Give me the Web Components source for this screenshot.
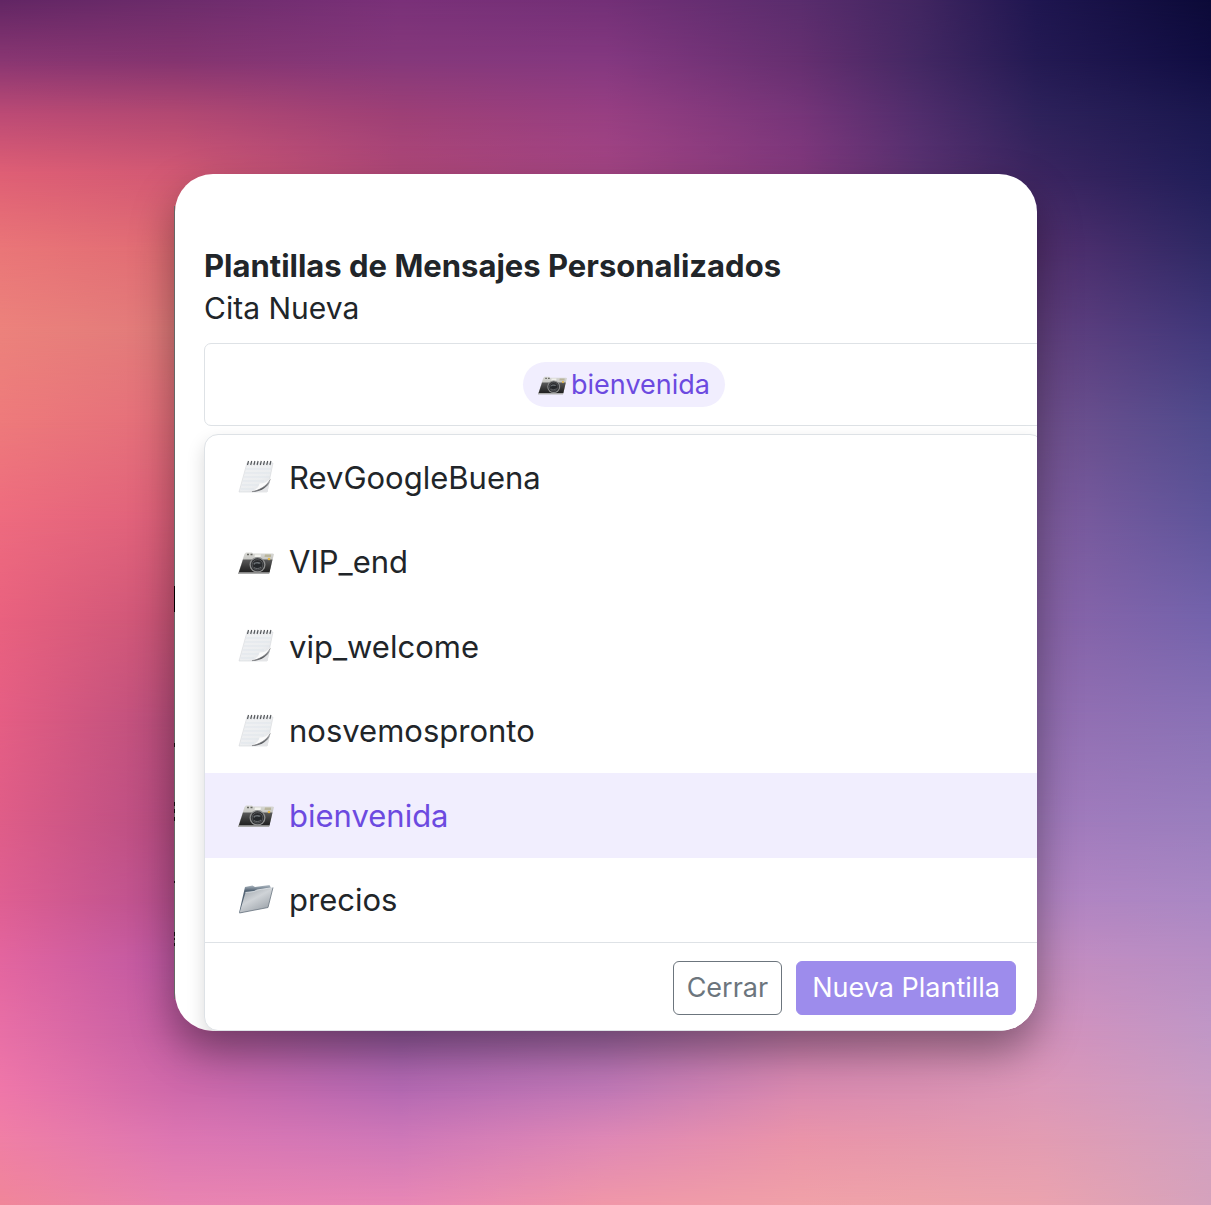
<!DOCTYPE html>
<html lang="es">
<head>
<meta charset="utf-8">
<meta name="viewport" content="width=device-width, initial-scale=1">
<title>Plantillas de Mensajes Personalizados</title>
<style>
  body { margin: 0; font-family: Inter, "Open Sans", "Liberation Sans", sans-serif; color: #212529; }
</style>
</head>
<body>
<mesh-backdrop>
  <template-card>
    <span slot="title">Plantillas de Mensajes Personalizados</span>
    <span slot="subtitle">Cita Nueva</span>
    <template-field><template-chip icon="camera">bienvenida</template-chip></template-field>
    <template-menu>
      <template-option icon="note">RevGoogleBuena</template-option>
      <template-option icon="camera">VIP_end</template-option>
      <template-option icon="note">vip_welcome</template-option>
      <template-option icon="note">nosvemospronto</template-option>
      <template-option icon="camera" selected>bienvenida</template-option>
      <template-option icon="folder">precios</template-option>
      <action-button slot="actions" variant="outline">Cerrar</action-button>
      <action-button slot="actions" variant="primary">Nueva Plantilla</action-button>
    </template-menu>
  </template-card>
</mesh-backdrop>
<script>
const ICONS = {
  note: `
    <defs>
      <linearGradient id="paper" x1="0" y1="0" x2="1" y2="1"><stop offset="0" stop-color="#f1f2f4"/><stop offset=".6" stop-color="#eceef0"/><stop offset="1" stop-color="#dcdfe2"/></linearGradient>
      <linearGradient id="shade" x1="12" y1="33" x2="33" y2="20" gradientUnits="userSpaceOnUse"><stop offset="0" stop-color="#b9bbbe"/><stop offset=".45" stop-color="#4b4e52"/><stop offset="1" stop-color="#a5a8ab"/></linearGradient>
    </defs>
    <path d="M9 4H35L29 33H1Z" fill="url(#paper)" stroke="#d5d7da" stroke-width=".6"/>
    <path d="M8 10H33M7 14H32.500M6 18H31.500M5 22H26M4 26H22M3 30H16" stroke="#dbe3ea" stroke-width=".7"/>
    <path d="M32.500 19.500 29.500 33H12C17 31.500 20 29 21.500 25 26 25 30 23 32.500 19.500Z" fill="#e4e5e7"/>
    <path d="M32 22C29 26.500 21 31.500 12 33H17C24 31.500 30 27.500 31.500 23.500Z" fill="url(#shade)"/>
    <path d="M32.500 19.500C30 22.500 26 24.500 21.500 24.500 20.500 29 17 31.500 12 33 21 31.500 28.500 27.500 32.500 19.500Z" fill="#fbfbfb"/>
    <path d="M32.300 20.500C28.500 27.500 21 31.500 14 32.700" stroke="#77797c" stroke-width=".8" fill="none"/>
    <path d="M9.500 6 10.500 2M12.700 6 13.700 2M15.900 6 16.900 2M19.100 6 20.100 2M22.300 6 23.300 2M25.500 6 26.500 2M28.700 6 29.700 2M31.900 6 32.900 2" stroke="#55585c" stroke-width="1.200"/>`,
  camera: `
    <defs>
      <linearGradient id="top" x1="0" y1="0" x2="0" y2="1"><stop offset="0" stop-color="#d9d9d5"/><stop offset="1" stop-color="#a3a3a0"/></linearGradient>
      <linearGradient id="body" x1="0" y1="0" x2="0" y2="1"><stop offset="0" stop-color="#5b5b5b"/><stop offset=".6" stop-color="#353535"/><stop offset="1" stop-color="#202020"/></linearGradient>
    </defs>
    <g transform="translate(0 1)">
    <path d="M6.500 9 8 7.500H14L15 8.500H34.500L36 9 31 29H0Z" fill="url(#top)"/>
    <path d="M5 14.500H34.500L31.500 27.500H.8Z" fill="url(#body)"/>
    <path d="M.5 27.500H31.500L31 29H0Z" fill="#aaa"/>
    <path d="M9 9.500H11M12.500 9.500H14.500" stroke="#64655f" stroke-width="1.600"/>
    <path d="M17 9.500H23L22.500 12H16.500Z" fill="#f1f1ec"/>
    <path d="M27 9.500H33V12H26.500Z" fill="#b9b59c"/>
    <circle cx="31" cy="14" r="1.300" fill="#e0b64a"/>
    <ellipse cx="19.500" cy="19.800" rx="8" ry="7.800" fill="#8f9090"/>
    <ellipse cx="19.500" cy="19.800" rx="6.700" ry="6.500" fill="#2b2c2e"/>
    <ellipse cx="19.500" cy="19.800" rx="5.400" ry="5.200" fill="none" stroke="#686b6e" stroke-width=".7"/>
    <ellipse cx="19.500" cy="19.800" rx="3.800" ry="3.400" fill="#25282b"/>
    <path d="M15.500 18.500C17.500 16.500 21 16.500 23 18L21 19C19 18.300 17 18.500 16 20Z" fill="#6d7276"/>
    <path d="M16 22.500C18 24 21 24 23 22" stroke="#85888b" stroke-width=".7" fill="none"/>
    </g>`,
  folder: `
    <defs>
      <linearGradient id="back" x1="0" y1="0" x2="0" y2="1"><stop offset="0" stop-color="#b4bec7"/><stop offset=".2" stop-color="#566676"/></linearGradient>
      <linearGradient id="front" x1="0" y1="0" x2=".7" y2="1"><stop offset="0" stop-color="#949ba2"/><stop offset=".5" stop-color="#cfd3d7"/><stop offset="1" stop-color="#9aa1a8"/></linearGradient>
    </defs>
    <path d="M7 5 14.500 3.500 17 5 31.500 3 33 6 28 25 1 31Z" fill="url(#back)"/>
    <path d="M7.500 10.500 16 9.500 19 8 35 5.500 30 25.500 1.500 31Z" fill="url(#front)"/>
    <path d="M7.500 10.500 16 9.500 19 8 35 5.500" fill="none" stroke="#e6eaee" stroke-width=".8"/>
    <path d="M35 5.500 30 25.500 1.500 31" fill="none" stroke="#6a7580" stroke-width=".8"/>`
};

function define(name, markup, setup) {
  const template = document.createElement("template");
  template.innerHTML = markup;
  customElements.define(name, class extends HTMLElement {
    constructor() {
      super();
      this.attachShadow({ mode: "open" }).append(template.content.cloneNode(true));
    }
    connectedCallback() {
      if (setup) setup(this, this.shadowRoot);
    }
  });
}

/* Each row is a horizontal gradient that fades in from the row above it. */
const WIDE = [0, 175, 400, 605, 800, 920, 1037, 1211];
const SIDES = [0, 175, 1037, 1211];
const MESH = [
  [0, "622664 6c2c6b 7a3179 733077 5a2d6d 412661 1f1650 0c0a38"],
  [60, "893672 843470 85387b 843880 652f70 432863 241a53 100d42"],
  [115, "bd4b75 b34972 9e4076 983f82 763579 502d6c 2e225b 1a174e"],
  [174, "df5f75 d25974 b04879 a44584 83397e 5a3272 3b2560 201d58"],
  [250, "ea7678 e06c74 543070 2f2965"],
  [330, "ec827c e07a7a 63407f 40377a"],
  [420, "ee7a7b e36e7a 72508e 4f4a8c"],
  [520, "ee6b7f dd607a 805c9e 5f559b"],
  [620, "e9617f c95577 8a64a8 7463ac"],
  [720, "e55e84 b84e7c 946fb2 8a72b6"],
  [820, "df5d88 b54c82 a27abc 9a7ebe"],
  [900, "df5f92 b7508e b384c2 aa88c4"],
  [960, "e3659f bd58a2 c48cc0 b78ec4"],
  [1031, "e86fa6 c45fa4 a462ae b070b4 d084b6 d68cb8 d491bc c097c6"],
  [1090, "ef77a9 cf69aa b469b2 c078b6 da8ab0 da90b2 dc98b8 cb9cc4"],
  [1140, "f07fa5 dd76b2 cf78b8 df88b5 ea94a9 e698ad e39cb2 d29fc0"],
  [1205, "f08699 e984b0 e887b5 f097a8 f0a1a8 eea3aa eba3ae d5a2bc"]
];

define("mesh-backdrop", `
  <style>
    :host { display: grid; min-height: 100vh; }
    .mesh, .content { grid-area: 1 / 1; }
    .mesh { display: grid; }
    .mesh div { grid-area: 1 / 1; }
    .content { position: relative; padding: 174px 174px 174px 175px; }
  </style>
  <div class="mesh" aria-hidden="true"></div>
  <div class="content"><slot></slot></div>`,
  (host, root) => {
    const mesh = root.querySelector(".mesh");
    MESH.forEach(([y, list], i) => {
      const colors = list.split(" ");
      const xs = colors.length === 8 ? WIDE : SIDES;
      const layer = document.createElement("div");
      layer.style.background = `linear-gradient(to right, ${colors.map((c, k) => `#${c} ${xs[k] / 12.11}%`).join(", ")})`;
      if (i) layer.style.maskImage = `linear-gradient(transparent ${MESH[i - 1][0] / 12.05}%, #000 ${y / 12.05}%)`;
      mesh.append(layer);
    });
  });

define("template-card", `
  <style>
    :host { display: block; position: relative; border-radius: 38px; box-shadow: 0 20px 44px rgba(0, 0, 0, .4); }
    .edge {
      position: absolute; left: -1px; top: 32px; bottom: 32px; width: 1px;
      background:
        linear-gradient(#000, #000) 0 380px / 1px 26px no-repeat,
        linear-gradient(#111, #111) 0 537px / 1px 4px no-repeat,
        linear-gradient(#111, #111) 0 596px / 1px 4px no-repeat,
        linear-gradient(#111, #111) 0 603px / 1px 4px no-repeat,
        linear-gradient(#111, #111) 0 611px / 1px 4px no-repeat,
        linear-gradient(#111, #111) 0 675px / 1px 2px no-repeat,
        linear-gradient(#111, #111) 0 726px / 1px 4px no-repeat,
        linear-gradient(#111, #111) 0 732px / 1px 2px no-repeat,
        linear-gradient(#111, #111) 0 737px / 1px 3px no-repeat,
        #666;
    }
    .surface { overflow: hidden; border-radius: 38px; background: #fff; padding: 70px 0 0 29px; }
    h1, p { margin: 0; font-size: 30px; line-height: 43px; }
    h1 { font-size: 31px; font-weight: 700; }
    .body { display: flex; flex-direction: column; gap: 8px; margin: 13px -7px 0 0; }
  </style>
  <div class="edge"></div>
  <section class="surface">
    <h1><slot name="title"></slot></h1>
    <p><slot name="subtitle"></slot></p>
    <div class="body"><slot></slot></div>
  </section>`);

define("emoji-icon", `
  <style>
    :host { display: block; flex: none; width: 36px; height: 36px; }
    svg { display: block; width: 100%; height: 100%; }
  </style>
  <svg viewBox="0 0 36 36" aria-hidden="true"></svg>`,
  (host, root) => { root.querySelector("svg").innerHTML = ICONS[host.getAttribute("name")]; });

function placeIcon(host, root) {
  const icon = document.createElement("emoji-icon");
  icon.setAttribute("name", host.getAttribute("icon"));
  root.querySelector("emoji-icon").replaceWith(icon);
}

define("template-field", `
  <style>
    :host { display: block; }
    button {
      display: flex; align-items: center; justify-content: center; box-sizing: border-box;
      width: 100%; padding: 18px; border: 1px solid #dee2e6; border-radius: 7px;
      background: #fff; font: inherit; color: inherit;
    }
  </style>
  <button type="button" aria-haspopup="listbox" aria-expanded="true"><slot></slot></button>`);

define("template-chip", `
  <style>
    :host {
      display: flex; align-items: center; gap: 4px; padding: 0 15px;
      border-radius: 23px; background: #f1eefe; color: #6c4ae0; font-size: 27px; line-height: 45px;
    }
    emoji-icon { width: 29px; height: 29px; }
  </style>
  <emoji-icon></emoji-icon><span><slot></slot></span>`, placeIcon);

define("template-menu", `
  <style>
    :host {
      display: block; border: 1px solid #dee2e6; border-radius: 14px;
      background: #fff; box-shadow: 0 8px 18px rgba(0, 0, 0, .15);
    }
    .list { display: flex; flex-direction: column; min-height: 507px; }
    footer {
      display: flex; justify-content: flex-end; gap: 14px;
      padding: 18px 27px 15px; border-top: 1px solid #dee2e6;
    }
  </style>
  <div class="list" role="listbox" aria-label="Plantillas"><slot></slot></div>
  <footer><slot name="actions"></slot></footer>`);

define("template-option", `
  <style>
    :host { display: flex; flex: 1; }
    :host([selected]) { background: #f1eefe; color: #6c4ae0; }
    button {
      display: flex; flex: 1; align-items: center; gap: 15px; padding: 0 33px;
      border: 0; background: none; color: inherit; font: inherit; font-size: 31px; line-height: 43px; text-align: left;
    }
  </style>
  <button type="button" role="option"><emoji-icon></emoji-icon><span><slot></slot></span></button>`, (host, root) => {
    placeIcon(host, root);
    root.querySelector("button").setAttribute("aria-selected", host.hasAttribute("selected"));
  });

define("action-button", `
  <style>
    :host { display: block; }
    button {
      display: block; padding: 7px 13px; border: 1px solid #6c757d; border-radius: 6px;
      background: #fff; color: #6c757d; font: inherit; font-size: 27px; line-height: 38px;
    }
    :host([variant="primary"]) button { padding: 7px 15px; border-color: #9d8cec; background: #9d8cec; color: #fff; }
  </style>
  <button type="button"><slot></slot></button>`);
</script>
</body>
</html>
